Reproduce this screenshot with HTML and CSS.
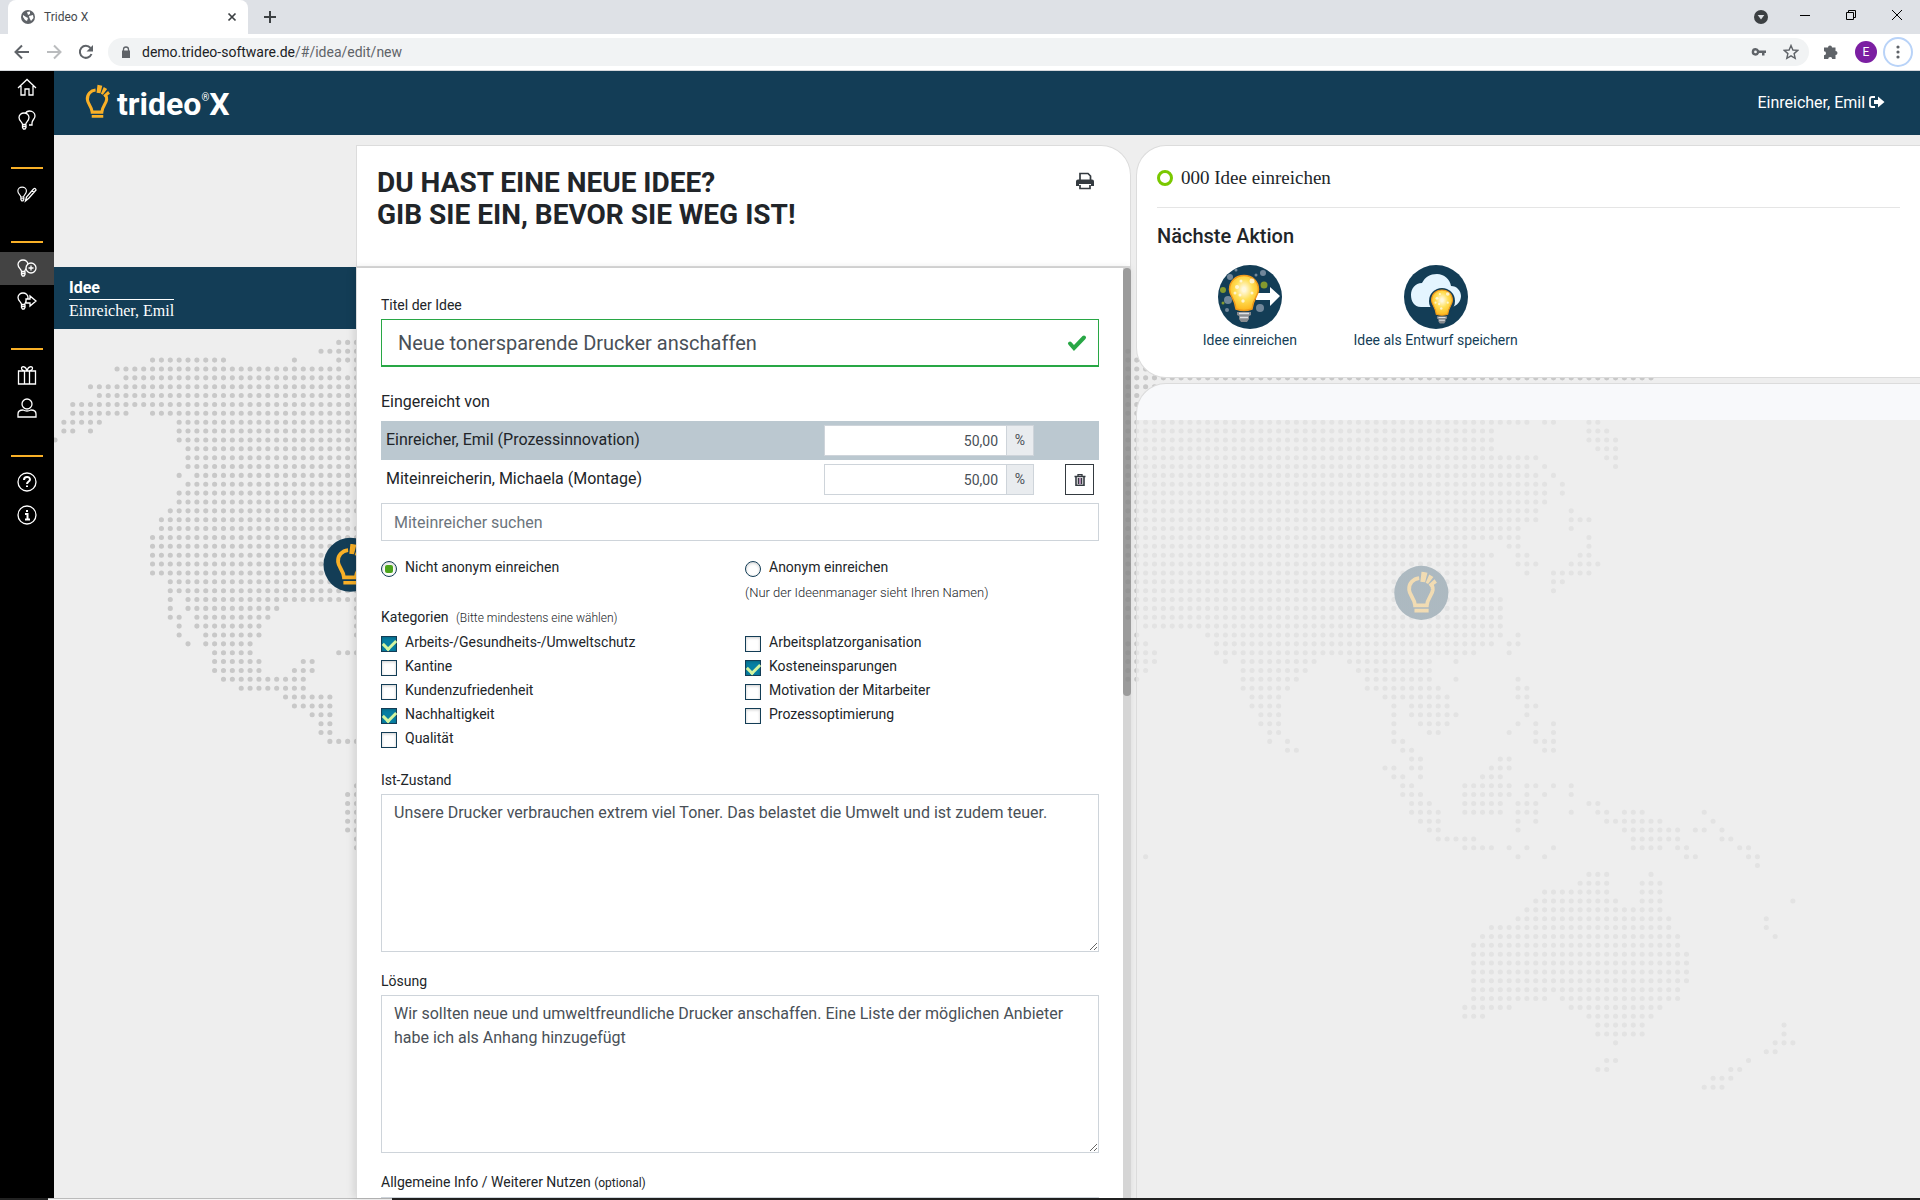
FILE: index.html
```html
<!DOCTYPE html>
<html lang="de">
<head>
    <meta charset="UTF-8">
    <meta name="viewport" content="width=device-width, initial-scale=1.0">
    <title>Trideo X</title>
    <link rel="stylesheet" href="styles.css">
</head>
<body>
    <svg class="defs" aria-hidden="true">
        <symbol id="bulb" viewBox="0 0 26 36">
            <path d="M11 5.500C6 6 2 10 2.500 15.500c.3 4.500 4.500 7 5 13h10c.5-6 4.500-8.500 5-13 .1-2-.3-3.500-1-5" fill="none" stroke="#f9b027" stroke-width="3.200"/>
            <path d="M7 31.500h12v3H7zM13 0l5 1-2 8-4-.5zM19.500 2.500l3.500 2-4.500 6-2-1zM24 6.500l2 3-5.500 3.500-1.500-2z" fill="#f9b027"/>
        </symbol>
        <symbol id="nav-bulb" viewBox="0 0 14 18">
            <path d="M4.500 12.500C4.500 10 1 9 1 5.500 1 3 3.300 1 6 1s5 2 5 4.500c0 3.500-3.300 4.500-3.300 7zM4.500 12.500v3l1 1.500h1.500l1-1.500v-3M4.500 14.500h3.300"/>
        </symbol>
        <symbol id="lamp" viewBox="0 0 32 50">
            <path d="M16 1.500c-8.500 0-14.500 6-14.500 14 0 6 5.500 9 6.500 19.500q8 3 16 0c1-10.500 6.500-13.500 6.500-19.500 0-8-6-14-14.500-14z" fill="url(#glow)" stroke="#f09a1a" stroke-width="1.500"/>
            <path d="M9 38h14v3l-2 1v3l-2 3h-6l-2-3v-3l-2-1z" fill="#888c90"/>
            <path d="M11 39.500h10M12 43.500h8" stroke="#dfe2e5" stroke-width="1.500"/>
            <g fill="#fff" opacity=".7"><circle cx="9" cy="13" r="2"/><circle cx="13" cy="7" r="1.500"/><circle cx="24" cy="7" r="2.500"/><circle cx="7" cy="19" r="1.500"/><circle cx="24" cy="19" r="1.500"/><circle cx="15" cy="27" r="1.700"/><circle cx="12" cy="21" r="1.500"/></g>
        </symbol>
        <radialGradient id="glow" cx=".5" cy=".4" r=".6">
            <stop offset=".1" stop-color="#fff8dc"/><stop offset=".5" stop-color="#ffdf55"/><stop offset="1" stop-color="#fdb61c"/>
        </radialGradient>
    </svg>

    <div class="tabstrip">
        <div class="tab">
            <svg width="14" height="14" viewBox="0 0 14 14"><circle cx="7" cy="7" r="7" fill="#5f6368"/><path d="M2 5l3 2 2 1-1 3-2-1-2-3zM6 2l3-.5L9 4 7 5zM8 6l4-1 .5 3L10 11 8.500 8z" fill="#fff"/></svg>
            <span>Trideo X</span>
            <button class="plain" aria-label="Tab schließen"><svg width="10" height="10" viewBox="0 0 10 10"><path d="M1.500 1.500l7 7M8.500 1.500l-7 7" stroke="#3c4043" stroke-width="1.700"/></svg></button>
        </div>
        <button class="plain newtab" aria-label="Neuer Tab"><svg width="12" height="12" viewBox="0 0 12 12"><path d="M6 0v12M0 6h12" stroke="#3c4043" stroke-width="2"/></svg></button>
        <div class="winbuttons">
            <button class="plain tabsearch" aria-label="Tabs durchsuchen"><svg width="14" height="14" viewBox="0 0 14 14"><circle cx="7" cy="7" r="7" fill="#3c4043"/><path d="M3.700 5h6.600L7 9.500z" fill="#dee1e6"/></svg></button>
            <button class="plain" aria-label="Minimieren"><svg width="10" height="10" viewBox="0 0 10 10"><path d="M0 5.500h10" stroke="#000"/></svg></button>
            <button class="plain" aria-label="Verkleinern"><svg width="10" height="10" viewBox="0 0 10 10"><path d="M.5 2.500h7v7h-7zM2.500 2.500v-2h7v7h-2" fill="none" stroke="#000"/></svg></button>
            <button class="plain" aria-label="Schließen"><svg width="10" height="10" viewBox="0 0 10 10"><path d="M0 0l10 10M10 0L0 10" stroke="#000"/></svg></button>
        </div>
    </div>
    <div class="toolbar">
        <button class="plain" aria-label="Zurück"><svg width="16" height="16" viewBox="0 0 16 16"><path d="M15 8H2M8 1.500L1.500 8 8 14.500" fill="none" stroke="#5f6368" stroke-width="2"/></svg></button>
        <button class="plain" aria-label="Vor"><svg width="16" height="16" viewBox="0 0 16 16"><path d="M1 8h13M8 1.500L14.500 8 8 14.500" fill="none" stroke="#babcbe" stroke-width="2"/></svg></button>
        <button class="plain" aria-label="Neu laden"><svg width="16" height="16" viewBox="0 0 16 16"><path d="M13.500 10A6 6 0 1 1 12.500 4" fill="none" stroke="#5f6368" stroke-width="2"/><path d="M15 1v6.500H8.500z" fill="#5f6368"/></svg></button>
        <div class="omnibox">
            <svg width="10" height="12" viewBox="0 0 10 12"><path d="M2.500 5V3.500a2.500 2.500 0 0 1 5 0V5" fill="none" stroke="#5f6368" stroke-width="1.300"/><path d="M1 4.500h8V12H1z" fill="#5f6368"/></svg>
            <span class="url">demo.trideo-software.de<span>/#/idea/edit/new</span></span>
            <button class="plain" aria-label="Passwort"><svg width="16" height="16" viewBox="0 0 16 16"><path d="M4.500 4a3.800 3.800 0 1 0 3.600 5H11v2.500h2.500V9H15V6.500H8.100A3.800 3.800 0 0 0 4.500 4zm0 2.500a1.400 1.400 0 1 1 0 2.800 1.400 1.400 0 0 1 0-2.800z" fill="#5f6368"/></svg></button>
            <button class="plain" aria-label="Lesezeichen"><svg width="16" height="16" viewBox="0 0 16 16"><path d="M8 1.500l1.900 4.500 4.900.4-3.700 3.200 1.100 4.800L8 11.900l-4.200 2.500 1.100-4.800L1.200 6.400 6.100 6z" fill="none" stroke="#5f6368" stroke-width="1.400"/></svg></button>
        </div>
        <button class="plain" aria-label="Erweiterungen"><svg width="16" height="16" viewBox="0 0 16 16"><path d="M5 3.500a2 2 0 0 1 4 0h3.500V7a2 2 0 0 1 0 4v4H9.200a2 2 0 0 0-4 0H1v-3.800a2 2 0 0 0 0-4V3.500z" fill="#5f6368"/></svg></button>
        <button class="plain avatar">E</button>
        <button class="plain menu" aria-label="Menü"><svg width="4" height="14" viewBox="0 0 4 14"><path d="M2 2v0M2 7v0M2 12v0" stroke="#5f6368" stroke-width="3.200" stroke-linecap="round"/></svg></button>
    </div>

    <div class="app">
        <nav class="sidebar">
            <a href="#" aria-label="Start"><svg viewBox="0 0 20 20"><path d="M1 11l9-8.500 9 8.500M4 9v9h4v-6h4v6h4V9"/></svg></a>
            <a href="#" aria-label="Ideen"><svg viewBox="0 0 20 20"><path d="M8 4c1-2 3-3 4.500-3C15.500 1 18 3 18 6c0 3-3 4-3 7v2h-3"/><use href="#nav-bulb" x="1" y="2" width="14" height="18" fill="#000"/></svg></a>
            <hr>
            <a href="#" aria-label="Entwürfe"><svg viewBox="0 0 20 20"><use href="#nav-bulb" x="0" y="2" width="12" height="16"/><path d="M8.500 17l1-4 7-8q2-1.500 2.500 1l-7 8zM15 6.500l2 2"/></svg></a>
            <hr>
            <a href="#" class="active" aria-label="Neue Idee"><svg viewBox="0 0 20 20"><use href="#nav-bulb" x="0" y="1" width="14" height="18"/><circle cx="14" cy="10" r="5" fill="#434343"/><path d="M14 7.500v5M11.500 10h5"/></svg></a>
            <a href="#" aria-label="Weiterleiten"><svg viewBox="0 0 20 20"><use href="#nav-bulb" x="0" y="1" width="14" height="18"/><path d="M9 8h4V5l6 5-6 5v-3H9z" fill="#000"/></svg></a>
            <hr>
            <a href="#" aria-label="Prämien"><svg viewBox="0 0 20 20"><path d="M1.500 6h17v13h-17zM7.500 6v13M12.500 6v13M10 6C7 6 4 5 4.500 3S9 1 10 6c1-5 5-5 5.500-3S13 6 10 6z"/></svg></a>
            <a href="#" aria-label="Profil"><svg viewBox="0 0 20 20"><circle cx="10" cy="6" r="5"/><path d="M1 19v-3c0-3 2-4 5-4 3 1.500 5 1.500 8 0 3 0 5 1 5 4v3z"/></svg></a>
            <hr>
            <a href="#" aria-label="Hilfe"><svg viewBox="0 0 20 20"><circle cx="10" cy="10" r="9"/><path d="M7 8c0-4 6-4 6-.5 0 2-3 2-3 4.500M10 13.500V15" stroke-width="2"/></svg></a>
            <a href="#" aria-label="Info"><svg viewBox="0 0 20 20"><circle cx="10" cy="10" r="9"/><path d="M8 9h2.500v5.500M8 14.500h5M10 5v2" stroke-width="2"/></svg></a>
        </nav>

        <div class="page">
            <header class="topbar">
                <a href="#" class="logo">
                    <svg width="25" height="36"><use href="#bulb"/></svg>
                    <span>trideo<sup>®</sup>X</span>
                </a>
                <a href="#" class="user">Einreicher, Emil
                    <svg width="16" height="12" viewBox="0 0 16 12"><path d="M6 1H3Q1 1 1 3v6q0 2 2 2h3" fill="none" stroke="#fff" stroke-width="1.800"/><path d="M5 4h4V.5L15.500 6 9 11.500V8H5z" fill="#fff"/></svg>
                </a>
            </header>

            <main>
                <!-- dotted world map, one unit is one dot -->
                <svg class="map" viewBox="-.11 -23.39 210.45 120" preserveAspectRatio="xMinYMin meet" aria-hidden="true">
                    <path class="dots" d="M32 0h2.1M30 1h4.100M11 2h8.100M27 2h.1M32 2h2.100M7 3h25.100M34 3h.1M8 4h26.100M4 5h30.100M5 6h29.100M2 7h32.100M2 8h6.100M11 8h23.100M1 9h4.100M14 9h20.100M1 10h1.100M4 10h.1M14 10h20.100M0 11h.1M14 11h20.100M15 12h19.100M15 13h19.100M15 14h19.100M14 15h.1M16 15h18.100M15 16h19.100M14 17h19.100M14 18h20.100M13 19h21.100M12 20h21.100M12 21h22.100M11 22h23.100M11 23h23.100M11 24h23.100M11 25h23.100M11 26h23.100M13 27h21.100M13 28h21.100M13 29h.1M15 29h19.100M13 30h.1M15 30h10.100M34 30h.1M13 31h1.100M16 31h8.100M34 31h.1M14 32h.1M16 32h7.100M34 32h.1M14 33h.1M17 33h6.100M34 33h.1M15 34h.1M17 34h5.100M18 35h4.100M32 35h2.100M18 36h5.100M28 36h1.100M18 37h5.100M27 37h2.100M19 38h9.100M21 39h7.100M26 40h5.100M27 41h4.100M29 42h2.100M30 43h1.100M30 44h1.100M31 45h3.100M34 50h.1M33 51h1.100M33 52h1.100M33 53h1.100M33 54h1.100M33 55h1.100M34 56h.1M34 57h.1
                    M121 1h.1M121 2h9.100M121 3h9.100M121 4h59.100M121 5h9.100M121 6h9.100M121 7h9.100M121 8h9.100M121 9h45.100M168 9h1.100M173 9h1.100M121 10h41.100M173 10h2.100M121 11h41.100M173 11h3.100M121 12h41.100M174 12h2.100M121 13h46.100M175 13h1.100M121 14h45.100M168 14h.1M176 14h.1M121 15h46.100M169 15h.1M121 16h47.100M170 16h.1M121 17h47.100M170 17h.1M121 18h47.100M121 19h46.100M171 19h.1M121 20h46.100M171 20h2.100M121 21h44.100M171 21h.1M121 22h44.100M173 22h.1M121 23h38.100M164 23h1.100M173 23h.1M121 24h41.100M165 24h1.100M172 24h1.100M121 25h40.100M165 25h2.100M171 25h3.100M121 26h40.100M166 26h.1M169 26h4.100M121 27h41.100M169 27h1.100M121 28h41.100M169 28h.1M121 29h42.100M121 30h42.100M121 31h42.100M123 32h40.100M122 33h.1M130 33h33.100M165 33h.1M121 34h2.100M131 34h31.100M164 34h1.100M121 35h3.100M131 35h29.100M164 35h.1M121 36h3.100M132 36h.1M134 36h8.100M146 36h9.100M158 36h.1M121 37h2.100M134 37h7.100M147 37h8.100M121 38h1.100M134 38h6.100M148 38h7.100M158 38h.1M165 38h.1M134 39h5.100M148 39h8.100M165 39h1.100M135 40h3.100M150 40h7.100M165 40h1.100M135 41h3.100M151 41h.1M153 41h4.100M166 41h1.100M136 42h2.100M151 42h.1M153 42h5.100M166 42h.1M136 43h2.100M151 43h.1M154 43h3.100M165 43h.1M167 43h.1M169 43h.1M137 44h1.100M151 44h.1M155 44h1.100M164 44h.1M167 44h.1M169 44h.1M137 45h.1M139 45h.1M151 45h1.100M167 45h2.100M139 46h1.100M152 46h1.100M168 46h1.100M153 47h1.100M163 47h1.100M150 48h1.100M153 48h1.100M162 48h2.100M151 49h1.100M154 49h.1M161 49h2.100M152 50h1.100M159 50h5.100M166 50h1.100M169 50h.1M171 50h.1M152 51h2.100M159 51h5.100M166 51h.1M168 51h.1M171 51h.1M153 52h2.100M159 52h4.100M165 52h2.100M173 52h1.100M153 53h3.100M159 53h4.100M165 53h2.100M171 53h.1M174 53h1.100M177 53h2.100M186 53h.1M154 54h2.100M165 54h.1M167 54h.1M175 54h6.100M187 54h.1M155 55h1.100M165 55h.1M177 55h6.100M185 55h1.100M188 55h.1M156 56h4.100M178 56h5.100M188 56h1.100M159 57h3.100M164 57h.1M166 57h.1M169 57h.1M178 57h3.100M183 57h1.100M190 57h1.100M123 58h.1M165 58h.1M168 58h.1M184 58h1.100M191 58h1.100M192 59h.1M173 60h2.100M180 60h.1M172 61h3.100M179 61h2.100M168 62h7.100M179 62h2.100M167 63h9.100M179 63h2.100M196 63h.1M166 64h15.100M165 65h17.100M193 65h.1M162 66h20.100M193 66h.1M161 67h22.100M194 67h.1M160 68h23.100M160 69h24.100M160 70h24.100M160 71h24.100M160 72h24.100M160 73h23.100M160 74h8.100M170 74h13.100M159 75h5.100M171 75h10.100M159 76h2.100M173 76h7.100M174 77h5.100M195 77h.1M174 78h5.100M195 78h.1M176 79h.1M194 79h2.100M193 80h1.100M175 81h1.100M191 81h.1M174 82h1.100M189 82h1.100M187 83h2.100M186 84h2.100"/>
                    <circle cx="33.330" cy="25.080" r="3.050" fill="#133d56"/>
                    <use href="#bulb" x="31.500" y="22.700" width="3.650" height="4.800"/>
                    <circle cx="154.100" cy="28.250" r="3.050" fill="#133d56"/>
                    <use href="#bulb" x="152.300" y="25.850" width="3.650" height="4.800"/>
                </svg>

                <aside class="ideabar">
                    <b>Idee</b>
                    <span>Einreicher, Emil</span>
                </aside>

                <section class="form">
                    <div class="formhead">
                        <h1>DU HAST EINE NEUE IDEE?<br>GIB SIE EIN, BEVOR SIE WEG IST!</h1>
                        <button class="plain print" aria-label="Drucken"><svg width="18" height="18" viewBox="0 0 18 18"><path d="M4 8V1.500h8L14.500 4v4M4 13v3.500h10V13" fill="none" stroke="#343a40" stroke-width="1.700"/><path d="M2 7.500h14q2 0 2 2V14h-3v-2H3v2H0V9.500q0-2 2-2z" fill="#343a40"/></svg></button>
                    </div>
                    <div class="formbody">
                        <form class="fields">
                            <label for="title" class="name">Titel der Idee</label>
                            <div class="titlebox">
                                <input type="text" id="title" value="Neue tonersparende Drucker anschaffen">
                                <svg width="20" height="18" viewBox="0 0 20 18"><path d="M3 9.500l4 4.500L17 3.500" fill="none" stroke="#28a745" stroke-width="4" stroke-linecap="round"/></svg>
                            </div>

                            <h2 class="by">Eingereicht von</h2>
                            <div class="person me">
                                <label for="share1">Einreicher, Emil (Prozessinnovation)</label>
                                <div class="share"><input type="text" id="share1" value="50,00"><span>%</span></div>
                            </div>
                            <div class="person">
                                <label for="share2">Miteinreicherin, Michaela (Montage)</label>
                                <div class="share"><input type="text" id="share2" value="50,00"><span>%</span></div>
                                <button type="button" class="trash" aria-label="Löschen"><svg width="12" height="12" viewBox="0 0 12 12"><path d="M4 2V.7h4V2M.5 2.500h11" fill="none" stroke="#343a40" stroke-width="1.300"/><path d="M2 3v8.300h8V3M4.500 4v6M7.500 4v6" fill="none" stroke="#343a40" stroke-width="1.600"/><path d="M6 4v6" stroke="#a050a0"/></svg></button>
                            </div>
                            <input type="text" class="search" placeholder="Miteinreicher suchen" aria-label="Miteinreicher suchen">

                            <div class="options">
                                <label><input type="radio" name="anon" checked>Nicht anonym einreichen</label>
                                <label><input type="radio" name="anon">Anonym einreichen</label>
                                <span class="hint">(Nur der Ideenmanager sieht Ihren Namen)</span>
                            </div>

                            <h3 class="cats">Kategorien <small>(Bitte mindestens eine wählen)</small></h3>
                            <div class="options">
                                <label><input type="checkbox" checked>Arbeits-/Gesundheits-/Umweltschutz</label>
                                <label><input type="checkbox">Arbeitsplatzorganisation</label>
                                <label><input type="checkbox">Kantine</label>
                                <label><input type="checkbox" checked>Kosteneinsparungen</label>
                                <label><input type="checkbox">Kundenzufriedenheit</label>
                                <label><input type="checkbox">Motivation der Mitarbeiter</label>
                                <label><input type="checkbox" checked>Nachhaltigkeit</label>
                                <label><input type="checkbox">Prozessoptimierung</label>
                                <label><input type="checkbox">Qualität</label>
                            </div>

                            <div class="areas">
                                <label for="state" class="name">Ist-Zustand</label>
                                <textarea id="state">Unsere Drucker verbrauchen extrem viel Toner. Das belastet die Umwelt und ist zudem teuer.</textarea>
                                <label for="solution" class="name">Lösung</label>
                                <textarea id="solution">Wir sollten neue und umweltfreundliche Drucker anschaffen. Eine Liste der möglichen Anbieter habe ich als Anhang hinzugefügt</textarea>
                                <label for="info" class="name">Allgemeine Info / Weiterer Nutzen <small>(optional)</small></label>
                                <textarea id="info"></textarea>
                            </div>
                        </form>
                        <div class="scroll"><div class="thumb"></div></div>
                    </div>
                </section>

                <div class="side">
                    <section class="actions">
                        <p class="status"><i></i>000 Idee einreichen</p>
                        <h2>Nächste Aktion</h2>
                        <div class="actionlist">
                            <button class="plain">
                                <svg width="64" height="64" viewBox="0 0 64 64">
                                    <circle cx="32" cy="32" r="32" fill="#133d56"/>
                                    <g fill="#71879a"><circle cx="10" cy="35" r="4"/><circle cx="42" cy="43" r="4"/><circle cx="45" cy="8" r="3"/><circle cx="18" cy="5" r="1.500"/><circle cx="9" cy="45" r="2"/><circle cx="12" cy="12" r="3"/><circle cx="38" cy="10" r="1.500"/></g>
                                    <g fill="#84992f"><circle cx="5" cy="25" r="3"/><circle cx="46" cy="20" r="3.500"/><circle cx="5" cy="38" r="1.500"/></g>
                                    <path d="M38 28h14v-6l10 9-10 10v-6H38z" fill="#fff"/>
                                    <use href="#lamp" x="10" y="9" width="32" height="50"/>
                                </svg>
                                Idee einreichen
                            </button>
                            <button class="plain">
                                <svg width="64" height="64" viewBox="0 0 64 64">
                                    <circle cx="32" cy="32" r="32" fill="#133d56"/>
                                    <path d="M17 42C10 42 7 36 7 30s4-12 11-12c3-6 8-9 15-9s13 5 14 12c6 0 10 5 10 10s-4 10-9 11z" fill="#e4f5ff"/>
                                    <circle cx="38" cy="36" r="13" fill="#133d56"/>
                                    <use href="#lamp" x="26" y="24" width="24" height="36"/>
                                </svg>
                                Idee als Entwurf speichern
                            </button>
                        </div>
                    </section>
                    <section class="details"></section>
                </div>
            </main>
        </div>
    </div>
    <div class="taskbar"><div></div></div>
</body>
</html>
```
FILE: styles.css
```css
*{
    box-sizing: border-box;
}

body{
    margin: 0;
    height: 100vh;
    display: flex;
    flex-direction: column;
    overflow: hidden;
    font-family: Roboto, sans-serif;
    font-size: 14px;
    line-height: 20px;
    color: #212529;
    background-color: #eee;
}

h1, h2, h3, p{
    margin: 0;
    font-weight: 400;
}

a{
    color: inherit;
    text-decoration: none;
}

input, textarea, button{
    font: inherit;
    color: #495057;
    border-radius: 0;
}

.defs{
    position: absolute;
    width: 0;
    height: 0;
}

.plain{
    display: flex;
    align-items: center;
    justify-content: center;
    padding: 0;
    border: 0;
    background: none;
}

/* browser window */
.tabstrip{
    display: flex;
    align-items: center;
    height: 34px;
    padding: 0 18px 0 8px;
    background-color: #dee1e6;
}

.tab{
    display: flex;
    align-items: center;
    gap: 9px;
    width: 240px;
    height: 34px;
    padding: 0 11px 0 13px;
    border-radius: 8px 8px 0 0;
    background-color: #fff;
    font-size: 12px;
    color: #45494d;
}

.tab span{
    flex: 1;
}

.newtab{
    margin-left: 16px;
}

.winbuttons{
    display: flex;
    align-items: center;
    gap: 36px;
    margin-left: auto;
    padding-bottom: 4px;
}

.tabsearch{
    margin-right: -4px;
    padding-top: 4px;
}

.toolbar{
    display: flex;
    align-items: center;
    gap: 14px;
    height: 37px;
    padding: 0 7px 0 14px;
    border-bottom: 1px solid #d5d8dc;
    background-color: #fff;
}

.toolbar > button + button{
    margin-left: 2px;
}

.omnibox{
    flex: 1;
    display: flex;
    align-items: center;
    gap: 16px;
    height: 28px;
    padding: 0 10px 0 13px;
    border-radius: 14px;
    background-color: #f1f3f4;
}

.url{
    flex: 1;
    margin-left: -5px;
    color: #202124;
}

.url span{
    color: #5f6368;
}

.avatar{
    width: 22px;
    height: 22px;
    border-radius: 50%;
    background-color: #7b1fa2;
    color: #fff;
    font-size: 12px;
}

.toolbar > .menu.menu{
    width: 30px;
    height: 30px;
    margin-left: -8px;
    border: 2px solid #b9d3f8;
    border-radius: 50%;
}

/* navigation */
.app{
    flex: 1;
    display: flex;
    min-height: 0;
}

.sidebar{
    width: 54px;
    background-color: #000;
}

.sidebar a{
    display: flex;
    align-items: center;
    justify-content: center;
    height: 33px;
    padding-bottom: 2px;
}

.sidebar svg{
    width: 20px;
    height: 20px;
    fill: none;
    stroke: #fff;
    stroke-width: 1.3;
}

.sidebar .active{
    background-color: #434343;
}

.sidebar hr{
    height: 2px;
    margin: 30px 11px 9px;
    border: 0;
    background-color: #f9b027;
}

.page{
    flex: 1;
    display: flex;
    flex-direction: column;
    min-width: 0;
}

.topbar{
    display: flex;
    align-items: center;
    justify-content: space-between;
    height: 64px;
    padding: 0 35px 0 31px;
    background-color: #133d56;
    color: #fff;
}

.logo{
    display: flex;
    align-items: center;
    gap: 7px;
    padding-bottom: 2px;
    font-size: 32px;
    line-height: 36px;
    font-weight: 700;
}

.logo span{
    padding-top: 4px;
}

.logo sup{
    font-size: 10px;
    line-height: 10px;
    font-weight: 400;
    vertical-align: 14px;
}

.user{
    font-size: 16px;
}

/* content */
main{
    position: relative;
    flex: 1;
    display: grid;
    grid-template-columns: 302fr 775fr 789fr;
    grid-template-rows: minmax(0, 1fr);
    min-height: 0;
    padding-top: 10px;
}

.map{
    position: absolute;
    top: 0;
    left: 0;
    width: 100%;
}

.dots{
    fill: none;
    stroke: #c8c8c8;
    stroke-width: .57;
    stroke-linecap: round;
    stroke-dasharray: .01 .99;
}

.ideabar{
    position: relative;
    align-self: start;
    margin-top: 122px;
    height: 62px;
    padding: 10px 15px;
    background-color: #133d56;
    color: #fff;
}

.ideabar b, .ideabar span{
    display: table;
    font-size: 16px;
    line-height: 22px;
}

.ideabar span{
    border-top: 1px solid #fff;
    font-family: "Roboto Slab", "Liberation Serif", serif;
}

.form{
    position: relative;
    display: flex;
    flex-direction: column;
    min-height: 0;
}

.formhead{
    display: flex;
    justify-content: space-between;
    align-items: flex-start;
    height: 123px;
    padding: 21px 36px 0 20px;
    border: 1px solid #dcdcdc;
    border-bottom-width: 2px;
    border-radius: 0 30px 0 0;
    background-color: #fff;
}

h1{
    font-size: 28px;
    line-height: 32px;
    font-weight: 700;
}

.print{
    height: 28px;
}

.formbody{
    flex: 1;
    display: flex;
    min-height: 0;
    overflow: hidden;
    box-shadow: -2px 0 8px rgba(0, 0, 0, .12);
}

.fields{
    flex: 1;
    padding: 27px 24px 0;
    border-left: 1px solid #dcdcdc;
    background-color: #fff;
}

.scroll{
    width: 8px;
    background-color: rgba(0, 0, 0, .1);
}

.thumb{
    height: 46%;
    border-radius: 4px;
    background-color: rgba(140, 140, 140, .8);
}

.name{
    display: block;
    margin-bottom: 4px;
}

.titlebox{
    display: flex;
    align-items: center;
    height: 48px;
    padding: 0 11px 0 16px;
    border: 1px solid #28a745;
    border-bottom-width: 2px;
}

.titlebox input{
    flex: 1;
    padding: 0;
    border: 0;
    outline: 0;
    font-size: 20px;
    line-height: 30px;
}

.by{
    margin: 25px 0 9px;
    font-size: 16px;
    line-height: 20px;
}

.person{
    display: flex;
    align-items: center;
    height: 39px;
    padding: 0 5px;
    font-size: 16px;
}

.person label{
    width: 438px;
    padding-bottom: 1px;
}

.me{
    background-color: #bbc8d0;
}

.share{
    display: flex;
    width: 210px;
    height: 31px;
    border: 1px solid #ced4da;
    background-color: #fff;
    font-size: 14px;
    color: #495057;
}

.share input{
    flex: 1;
    min-width: 0;
    padding: 0 8px;
    border: 0;
    text-align: right;
}

.share span{
    width: 27px;
    border-left: 1px solid #ced4da;
    background-color: #e9ecef;
    line-height: 29px;
    text-align: center;
}

.trash{
    display: flex;
    align-items: center;
    justify-content: center;
    width: 29px;
    height: 31px;
    margin-left: auto;
    padding: 0;
    border: 1px solid #343a40;
    background-color: #fff;
}

.search{
    display: block;
    width: 100%;
    height: 38px;
    margin: 4px 0 14px;
    padding: 0 12px;
    border: 1px solid #ced4da;
    font-size: 16px;
}

.search::placeholder{
    color: #6c757d;
}

.options{
    display: grid;
    grid-template-columns: 364fr 354fr;
    line-height: 24px;
}

.options label{
    display: flex;
    align-items: center;
    gap: 8px;
    height: 24px;
}

.options input{
    appearance: none;
    display: flex;
    align-items: center;
    justify-content: center;
    flex: none;
    width: 16px;
    height: 16px;
    margin: 4px 0 0;
    border: 1px solid #133d56;
    background-color: #fff;
    box-shadow: inset 0 1px 3px rgba(0, 0, 0, .2);
}

.options input[type=radio]{
    border-radius: 50%;
}

.options input[type=radio]:checked::before{
    content: "";
    width: 8px;
    height: 8px;
    border-radius: 2px;
    background-color: #4ca41c;
}

.options input[type=checkbox]:checked{
    background-color: #077fa3;
}

.options input[type=checkbox]:checked::before{
    content: "";
    width: 6px;
    height: 10px;
    margin-bottom: 2px;
    border: solid #d5f5a0;
    border-width: 0 3px 3px 0;
    transform: rotate(45deg);
}

.hint{
    grid-column: 2;
    padding-top: 2px;
    font-size: 13px;
    font-weight: 300;
}

.cats{
    margin: 2px 0;
    font-size: 14px;
}

.cats small{
    margin-left: 4px;
    font-size: 12px;
    font-weight: 300;
}

.areas{
    padding-top: 20px;
}

.areas small{
    font-size: 12px;
}

textarea{
    display: block;
    width: 100%;
    height: 158px;
    margin-bottom: 19px;
    padding: 6px 12px;
    border: 1px solid #ced4da;
    font-size: 16px;
    line-height: 24px;
}

/* right column */
.side{
    position: relative;
    display: flex;
    flex-direction: column;
    gap: 5px;
    min-height: 0;
    padding-left: 5px;
}

.actions{
    height: 233px;
    padding: 20px 20px 0;
    border: 1px solid #dcdcdc;
    border-right: 0;
    border-radius: 30px 0 0 30px;
    background-color: #fff;
}

.status{
    display: flex;
    align-items: center;
    gap: 8px;
    height: 42px;
    padding-bottom: 17px;
    border-bottom: 1px solid #e5e5e5;
    font-family: "Roboto Slab", "Liberation Serif", serif;
    font-size: 19px;
}

.status i{
    width: 16px;
    height: 16px;
    border: 3px solid #7ac800;
    border-radius: 50%;
}

.actions h2{
    margin: 16px 0 17px;
    font-size: 20px;
    line-height: 24px;
    font-weight: 500;
}

.actionlist{
    display: grid;
    grid-template-columns: repeat(4, 1fr);
}

.actionlist button{
    flex-direction: column;
    gap: 1px;
    color: #133d56;
}

.details{
    flex: 1;
    border: 1px solid #dcdcdc;
    border-width: 1px 0 0 1px;
    border-radius: 30px 0 0 0;
    background: linear-gradient(#f8f9fb 36px, rgba(238, 238, 238, .7) 36px);
}

.taskbar{
    height: 2px;
    padding-left: 48px;
    background-color: #222;
}

.taskbar div{
    width: 344px;
    height: 2px;
    border-top: 1px solid #bbb;
    background-color: #f5f5f5;
}
```
